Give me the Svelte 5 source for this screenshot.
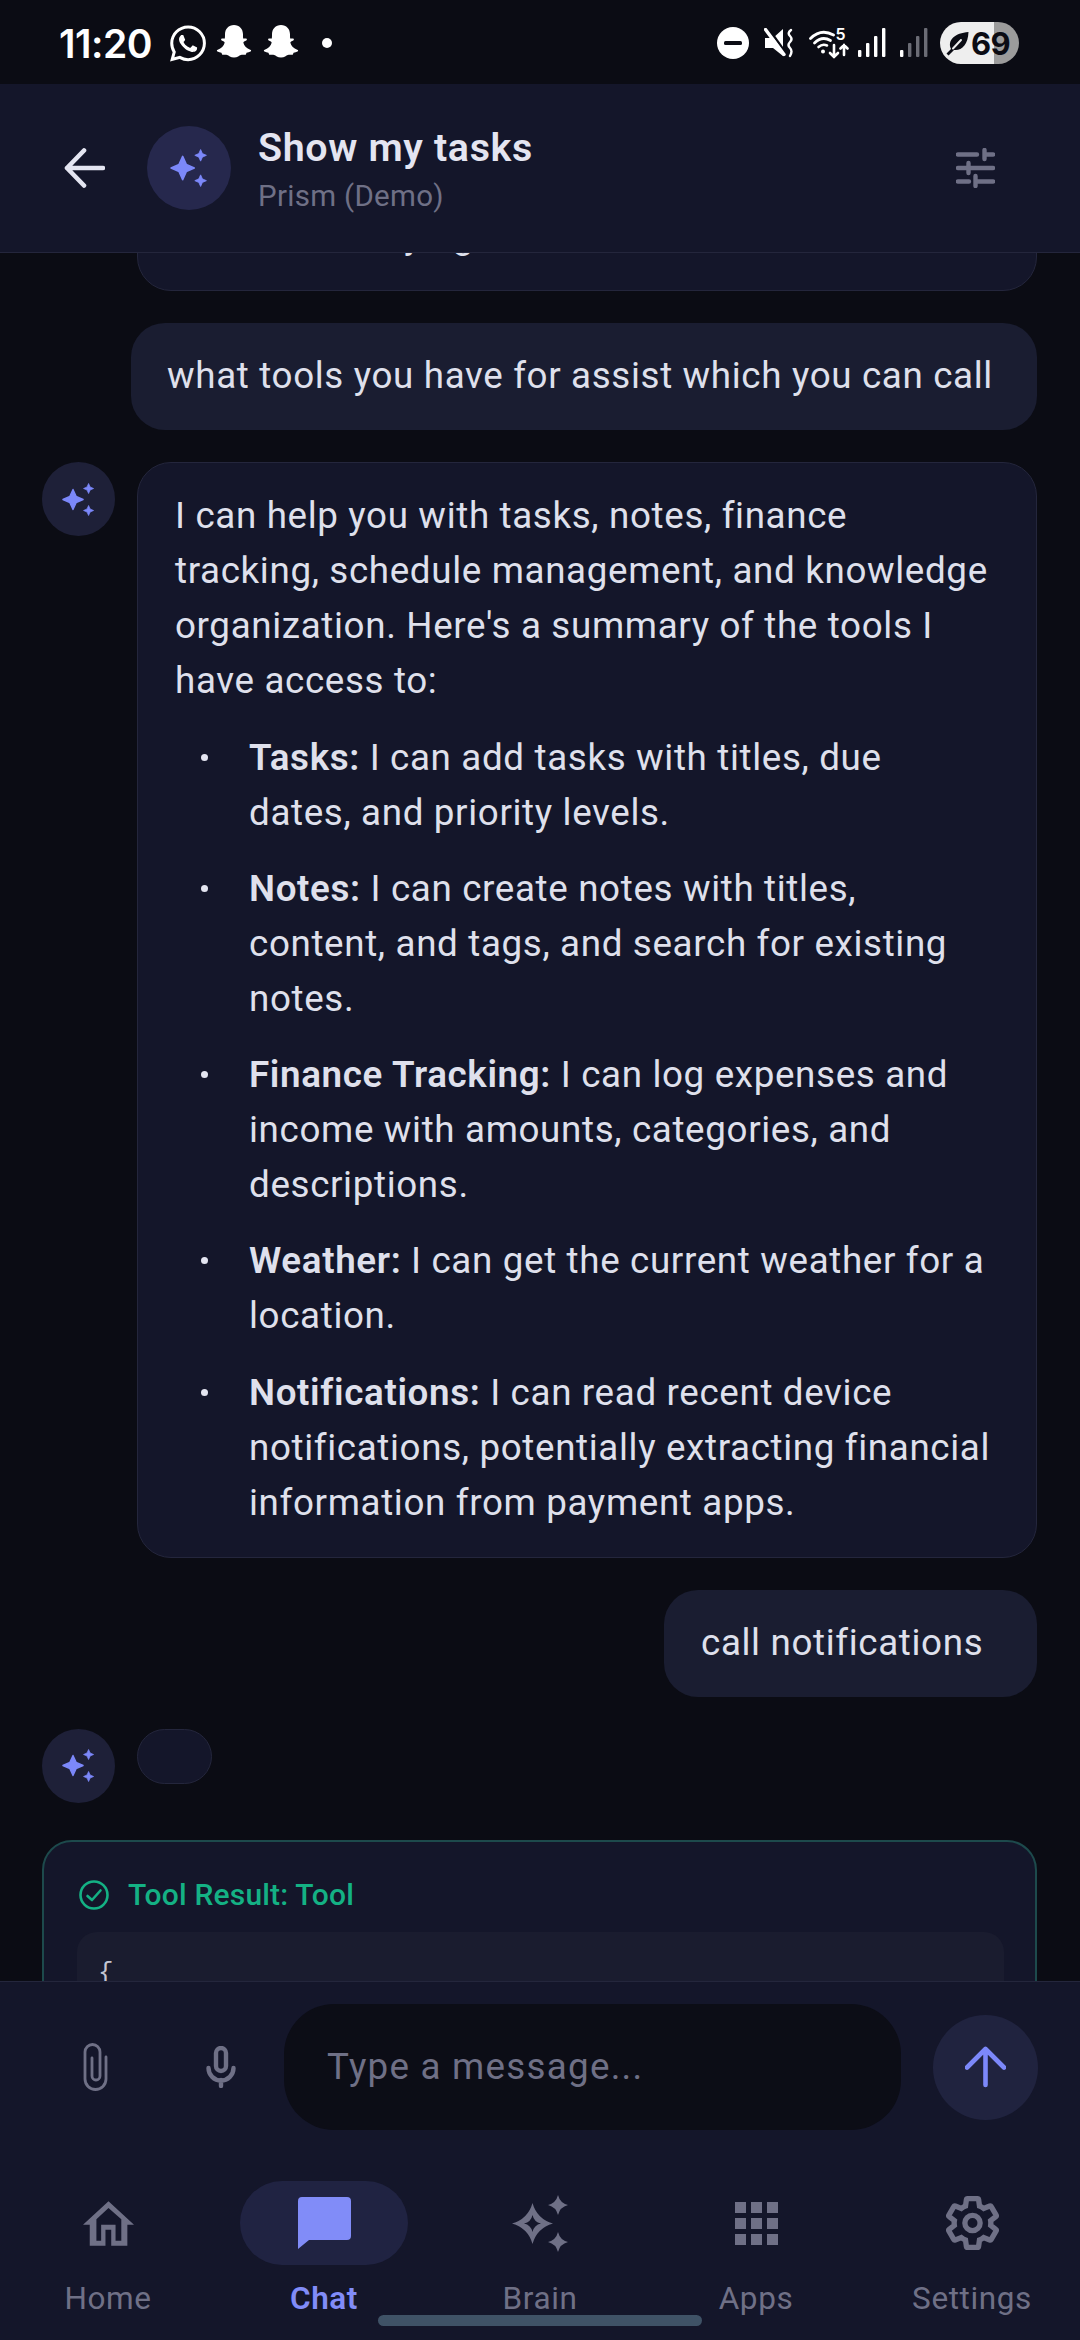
<script>
  const items = [
    { b: 'Tasks:', t: ' I can add tasks with titles, due dates, and priority levels.' },
    { b: 'Notes:', t: ' I can create notes with titles, content, and tags, and search for existing notes.' },
    { b: 'Finance Tracking:', t: ' I can log expenses and income with amounts, categories, and descriptions.' },
    { b: 'Weather:', t: ' I can get the current weather for a location.' },
    { b: 'Notifications:', t: ' I can read recent device notifications, potentially extracting financial information from payment apps.' }
  ];
  const star = 'M12 1 L15.4 8.6 L23 12 L15.4 15.4 L12 23 L8.6 15.4 L1 12 L8.6 8.6Z';
  const ghost = 'M12 2c3 0 5 2.2 5 5.2 0 1 0 1.8.1 2.3.5.2 1.2-.2 1.7 0 .6.3.4 1-.2 1.3-.6.3-1.4.4-1.4 1 .4 1.6 1.9 3.3 3.8 3.9.6.2.7.7.2 1-.7.4-1.5.5-2.2.7-.3.3-.2 1-.6 1.1-.7.2-1.7-.2-2.6.2-.9.3-1.8 1.4-3.8 1.4s-2.9-1.1-3.8-1.4c-.9-.4-1.9 0-2.6-.2-.4-.1-.3-.8-.6-1.1-.7-.2-1.5-.3-2.2-.7-.5-.3-.4-.8.2-1 1.9-.6 3.4-2.3 3.8-3.9 0-.6-.8-.7-1.4-1-.6-.3-.8-1-.2-1.3.5-.2 1.2.2 1.7 0 .1-.5.1-1.3.1-2.3C7 4.2 9 2 12 2z';
</script>

{#snippet sparkles(w)}
  <svg width={w} height={w} viewBox="0 0 36 36" fill="#7c88fa" stroke="#7c88fa" stroke-width="1.500" stroke-linejoin="round">
    <path transform="translate(0 6) scale(1)" d={star} />
    <path transform="translate(23 0) scale(.5)" d={star} />
    <path transform="translate(23 24) scale(.5)" d={star} />
  </svg>
{/snippet}

<div class="screen">
  <div class="status">
    <div class="st-left">
      <span class="time">11:20</span>
      <svg class="wa" viewBox="0 0 24 24" fill="#fff"><path d="M17.472 14.382c-.297-.149-1.758-.867-2.03-.967-.273-.099-.471-.148-.67.15-.197.297-.767.966-.94 1.164-.173.199-.347.223-.644.075-.297-.15-1.255-.463-2.39-1.475-.883-.788-1.48-1.761-1.653-2.059-.173-.297-.018-.458.13-.606.134-.133.298-.347.446-.52.149-.174.198-.298.298-.497.099-.198.05-.371-.025-.52-.075-.149-.669-1.612-.916-2.207-.242-.579-.487-.5-.669-.51-.173-.008-.371-.01-.57-.01-.198 0-.52.074-.792.372-.272.297-1.04 1.016-1.04 2.479 0 1.462 1.065 2.875 1.213 3.074.149.198 2.096 3.2 5.077 4.487.709.306 1.262.489 1.694.625.712.227 1.36.195 1.871.118.571-.085 1.758-.719 2.006-1.413.248-.694.248-1.289.173-1.413-.074-.124-.272-.198-.57-.347m-5.421 7.403h-.004a9.87 9.87 0 01-5.031-1.378l-.361-.214-3.741.982.998-3.648-.235-.374a9.86 9.86 0 01-1.51-5.26c.001-5.45 4.436-9.884 9.888-9.884 2.64 0 5.122 1.03 6.988 2.898a9.825 9.825 0 012.893 6.994c-.003 5.45-4.437 9.884-9.885 9.884m8.413-18.297A11.815 11.815 0 0012.05 0C5.495 0 .16 5.335.157 11.892c0 2.096.547 4.142 1.588 5.945L.057 24l6.305-1.654a11.882 11.882 0 005.683 1.448h.005c6.554 0 11.89-5.335 11.893-11.893a11.821 11.821 0 00-3.48-8.413z"/></svg>
      <svg class="snap" viewBox="1.500 2 21 20" fill="#fff"><path d={ghost}/></svg>
      <svg class="snap" viewBox="1.500 2 21 20" fill="#fff"><path d={ghost}/></svg>
      <span class="dot"></span>
    </div>
    <div class="st-right">
      <svg class="dnd" viewBox="0 0 32 32"><circle cx="16" cy="16" r="16" fill="#fff"/><rect x="7" y="14" width="18" height="4" rx="1.500" fill="#0b0c14"/></svg>
      <svg class="mute" viewBox="0 0 30 30" fill="#fff">
        <path d="M1 10 H9 L19 1 V28 L9 20 H1Z"/>
        <path d="M4 0 L24 28" stroke="#0b0c14" stroke-width="2.500"/>
        <path d="M1.500 1.500 L20 26.500" stroke="#fff" stroke-width="3.400" stroke-linecap="round"/>
        <path d="M27 2 Q23 5 26 8 Q29 11 26 14 Q23 17 26 20 Q29 23 26 28" fill="none" stroke="#fff" stroke-width="2.400" stroke-linecap="round"/>
      </svg>
      <svg class="wifi" viewBox="0 0 40 32" fill="none" stroke="#fff" stroke-linecap="round">
        <path d="M1.500 11.500 Q12 1 24.500 8" stroke-width="2.800"/>
        <path d="M5.500 16 Q13 8.500 21.500 13.500" stroke-width="2.800"/>
        <path d="M9.500 20 Q13.500 16.500 18 18.500" stroke-width="2.600"/>
        <circle cx="14" cy="24.500" r="2" fill="#fff" stroke="none"/>
        <text x="26.500" y="13" font-size="16" font-family="Inter, sans-serif" font-weight="600" fill="#fff" stroke="none">5</text>
        <path d="M25 18 V30 M21 26 L25 30 L29 26" stroke-width="2.600"/>
        <path d="M35 28 V18 M31.500 21.500 L35 18 L38.500 21.500" stroke-width="2.600"/>
      </svg>
      <svg class="sig" viewBox="0 0 28 30" fill="#fff"><rect x="0" y="22" width="3.400" height="7" rx="1"/><rect x="8" y="15" width="3.400" height="14" rx="1"/><rect x="16" y="8" width="3.400" height="21" rx="1"/><rect x="24" y="0" width="3.400" height="29" rx="1"/></svg>
      <svg class="sig sig2" viewBox="0 0 28 30"><rect x="0" y="22" width="3.400" height="7" rx="1" fill="#fff"/><rect x="8" y="15" width="3.400" height="14" rx="1" fill="#6b6c75"/><rect x="16" y="8" width="3.400" height="21" rx="1" fill="#6b6c75"/><rect x="24" y="0" width="3.400" height="29" rx="1" fill="#6b6c75"/></svg>
      <div class="batt">
        <svg viewBox="0 0 23 25"><path fill="#0b0c14" d="M22.500 1 C22 14 15.500 20 8 19 L2.500 24.500 L0.500 22.500 L5 18 C1 9 9 2 22.500 1Z"/><path d="M7 17.500 L15 9" stroke="#eeeeee" stroke-width="2" stroke-linecap="round"/></svg>
        <span>69</span>
      </div>
    </div>
  </div>

  <header class="head">
    <svg class="back" viewBox="0 0 41 40" fill="none" stroke="#e4e5f1" stroke-width="4.600" stroke-linecap="round" stroke-linejoin="round"><path d="M3 20 H39 M20 2.500 L3 20 L20 37.500"/></svg>
    <div class="hava">{@render sparkles(38)}</div>
    <div class="htext">
      <div class="htitle">Show my tasks</div>
      <div class="hsub">Prism (Demo)</div>
    </div>
    <svg class="tune" viewBox="0 0 39 40" fill="none" stroke="#6f7086" stroke-width="4.400" stroke-linecap="round"><path d="M2 6.500 H21 M29 6.500 H37 M28.500 2 V11 M2 20 H10 M13 20 H37 M12.500 15 V25 M2 33.500 H13 M20 33.500 H37 M19.500 28 V38"/></svg>
  </header>

  <main class="msgs">
    <div class="row clipped"><div class="bubble ai prev">I am still studying</div></div>

    <div class="row end"><div class="bubble user u1">what tools you have for assist which you can call</div></div>

    <div class="row">
      <div class="ava">{@render sparkles(33)}</div>
      <div class="bubble ai">
        <p>I can help you with tasks, notes, finance tracking, schedule management, and knowledge organization. Here's a summary of the tools I have access to:</p>
        <ul>
          {#each items as it}
            <li><b>{it.b}</b>{it.t}</li>
          {/each}
        </ul>
      </div>
    </div>

    <div class="row end"><div class="bubble user u2">call notifications</div></div>

    <div class="row">
      <div class="ava">{@render sparkles(33)}</div>
      <div class="bubble ai empty"></div>
    </div>

    <section class="tool">
      <div class="tool-h">
        <svg viewBox="0 0 30 30" fill="none" stroke="#14b184" stroke-width="2.600" stroke-linecap="round" stroke-linejoin="round"><circle cx="15" cy="15" r="13.500"/><path d="M8.500 16 L13 20 L21.500 10.500"/></svg>
        <span>Tool Result: Tool</span>
      </div>
      <pre class="code">{'{'}</pre>
    </section>
  </main>

  <footer class="foot">
    <div class="composer">
      <button class="ic" aria-label="Attach">
        <svg width="25" height="48" viewBox="0 0 25 48" fill="none" stroke="#6f7086" stroke-width="2.800" stroke-linecap="round"><path d="M23 14 V36 A10.500 10.500 0 0 1 2 36 V9 A7.500 7.500 0 0 1 17 9 V33 A4 4 0 0 1 9 33 V15"/></svg>
      </button>
      <button class="ic" aria-label="Voice">
        <svg width="30" height="42" viewBox="0 0 30 42" fill="none" stroke="#6f7086" stroke-width="4.400" stroke-linecap="round"><rect x="10" y="2" width="10" height="23" rx="5"/><path d="M2.500 22 A12.500 12.500 0 0 0 27.500 22 M15 34 V40"/></svg>
      </button>
      <div class="input">Type a message...</div>
      <button class="send" aria-label="Send">
        <svg width="41" height="42" viewBox="0 0 41 42" fill="none" stroke="#7c88fa" stroke-width="4.600" stroke-linecap="round" stroke-linejoin="round"><path d="M20.500 39 V3 M2 21.500 L20.500 3 L39 21.500"/></svg>
      </button>
    </div>
    <nav class="nav">
      <div class="tab">
        <div class="slot"><svg width="51" height="45" viewBox="0 0 50.600 44.300" fill="#6f7086"><path fill-rule="evenodd" d="M25.300 0 L50.600 23.300 H44 V44.300 H28 V28.300 H22.300 V44.300 H6.700 V23.300 H0Z M25.300 6.700 L13.300 18 V39.300 H18 V23.300 H32.300 V39.300 H38 V18Z"/></svg></div>
        <span>Home</span>
      </div>
      <div class="tab on">
        <div class="slot"><svg width="53" height="52" viewBox="0 0 53 52" fill="#818cf8"><path d="M4 0 H49 A4 4 0 0 1 53 4 V39 A4 4 0 0 1 49 43 H11 L0 52 V4 A4 4 0 0 1 4 0Z"/></svg></div>
        <span>Chat</span>
      </div>
      <div class="tab">
        <div class="slot"><svg width="56" height="57" viewBox="0 0 56 57" fill="#6f7086">
          <path fill-rule="evenodd" d="M20.500 8 Q25 24 41 28.500 Q25 33 20.500 49 Q16 33 0 28.500 Q16 24 20.500 8Z M20.500 20 Q22 27 29 28.500 Q22 30 20.500 37 Q19 30 12 28.500 Q19 27 20.500 20Z"/>
          <path d="M46 0 Q48 8 56 10 Q48 12 46 20 Q44 12 36 10 Q44 8 46 0Z"/>
          <path d="M46 37 Q48 45 56 47 Q48 49 46 57 Q44 49 36 47 Q44 45 46 37Z"/>
        </svg></div>
        <span>Brain</span>
      </div>
      <div class="tab">
        <div class="slot"><div class="grid9">{#each Array(9) as _}<i></i>{/each}</div></div>
        <span>Apps</span>
      </div>
      <div class="tab">
        <div class="slot"><svg width="53" height="56" viewBox="2 1 20 22" fill="none" stroke="#6f7086" stroke-width="2.100"><path d="M19.140 12.940c.04-.3.06-.61.06-.94 0-.32-.02-.64-.07-.94l2.030-1.580c.18-.14.23-.41.12-.61l-1.920-3.320c-.12-.22-.37-.29-.59-.22l-2.390.96c-.5-.38-1.030-.7-1.620-.94l-.36-2.540c-.04-.24-.24-.41-.48-.41h-3.840c-.24 0-.43.17-.47.41l-.36 2.540c-.59.24-1.130.57-1.620.94l-2.390-.96c-.22-.08-.47 0-.59.22L2.740 8.870c-.12.21-.08.47.12.61l2.030 1.580c-.05.3-.09.63-.09.94s.02.64.07.94l-2.030 1.580c-.18.14-.23.41-.12.61l1.920 3.320c.12.22.37.29.59.22l2.390-.96c.5.38 1.030.7 1.620.94l.36 2.540c.05.24.24.41.48.41h3.840c.24 0 .44-.17.47-.41l.36-2.540c.59-.24 1.130-.56 1.620-.94l2.390.96c.22.08.47 0 .59-.22l1.920-3.320c.12-.22.07-.47-.12-.61l-2.010-1.580z"/><circle cx="12" cy="12" r="3"/></svg></div>
        <span>Settings</span>
      </div>
    </nav>
    <div class="indicator"></div>
  </footer>
</div>

<style>
  :global(body) { margin: 0; background: #0b0c14; }
  .screen {
    width: 1080px; height: 2340px; display: flex; flex-direction: column; overflow: hidden;
    background: #0b0c14; font-family: Roboto, sans-serif; color: #e4e5f1;
  }
  .status { height: 84px; flex: none; display: flex; justify-content: space-between; align-items: center; padding: 2px 61px 0 59px; box-sizing: border-box; }
  .st-left, .st-right { display: flex; align-items: center; }
  .time { font: 600 39px Inter, sans-serif; letter-spacing: -0.5px; color: #fff; width: 112px; }
  .wa { width: 36px; height: 37px; margin-left: -1px; }
  .snap { width: 38px; height: 36px; margin-left: 9px; }
  .dot { width: 10px; height: 10px; border-radius: 50%; background: #fff; margin-left: 22px; }
  .dnd { width: 32px; height: 32px; }
  .mute { width: 30px; height: 30px; margin-left: 15px; }
  .wifi { width: 40px; height: 32px; margin-left: 15px; }
  .sig { width: 28px; height: 30px; margin-left: 9px; }
  .sig2 { margin-left: 14px; }
  .batt { width: 79px; height: 42px; border-radius: 21px; margin-left: 12px; display: flex; align-items: center; padding-left: 6px; box-sizing: border-box;
    background: linear-gradient(90deg, #eeeeee 68%, #9c9c9c 68%); color: #0b0c14; font: 700 31px Inter, sans-serif; letter-spacing: -0.6px; }
  .batt svg { width: 23px; height: 25px; margin-right: 2px; flex: none; }

  .head { height: 169px; flex: none; box-sizing: border-box; background: #14162a; border-bottom: 1px solid #24263c; display: flex; align-items: center; padding: 0 85px 1px 64px; position: relative; z-index: 2; }
  .back { width: 41px; height: 40px; }
  .hava { width: 84px; height: 84px; border-radius: 50%; background: #26284d; display: flex; align-items: center; justify-content: center; margin-left: 42px; }
  .htext { margin-left: 27px; flex: 1; padding-top: 5px; }
  .htitle { font-size: 39.400px; font-weight: 600; line-height: 50px; letter-spacing: .65px; color: #e4e5f1; }
  .hsub { font-size: 29.500px; line-height: 42px; letter-spacing: .3px; color: #6f7086; margin-top: 2px; }
  .tune { width: 39px; height: 40px; }

  .msgs { flex: 1; min-height: 0; overflow: hidden; display: flex; flex-direction: column; gap: 32px; padding: 0 43px 0 42px; }
  .row { display: flex; gap: 22px; flex: none; align-items: flex-start; }
  .row.end { justify-content: flex-end; }
  .clipped { justify-content: flex-end; margin-top: -71px; }
  .ava { width: 73px; height: 74px; border-radius: 50%; background: #1e2038; display: flex; align-items: center; justify-content: center; flex: none; }
  .bubble { font-size: 36.750px; line-height: 55.100px; letter-spacing: .65px; box-sizing: border-box; padding: 25px 45px 27px 37px; color: #dfe0ec; }
  .user { background: #1a1d31; border-radius: 34px; }
  .u1 { width: 906px; white-space: nowrap; padding-left: 36px; }
  .u2 { width: 373px; white-space: nowrap; }
  .ai { background: #14162a; border: 1px solid #24263c; border-radius: 34px; flex: 1; }
  .prev { flex: none; width: 900px; }
  .empty { flex: none; width: 75px; height: 55px; padding: 0; border-radius: 28px; }
  p { margin: 0 0 21px; }
  ul { margin: 0; padding: 0; list-style: none; }
  li { position: relative; padding-left: 74px; margin-bottom: 21px; }
  li:last-child { margin-bottom: 0; }
  li::before { content: ''; position: absolute; left: 26px; top: 24px; width: 7px; height: 7px; border-radius: 50%; background: #e4e5f1; }
  b { font-weight: 600; }

  .tool { flex: none; margin-top: 5px; background: #14162a; border: 2px solid #1d4a4c; border-radius: 30px; padding: 37px 31px 0 33px; height: 400px; box-sizing: border-box; }
  .tool-h { display: flex; align-items: center; gap: 19px; color: #14b184; font-size: 30px; font-weight: 500; line-height: 32px; letter-spacing: .2px; padding-left: 2px; }
  .tool-h svg { width: 30px; height: 30px; flex: none; }
  .code { margin: 21px 0 0; background: #1a1c2f; border-radius: 20px; padding: 26px 21px; font: 26px "Liberation Mono", monospace; color: #c4c5d2; height: 200px; box-sizing: border-box; }

  .foot { flex: none; height: 359px; box-sizing: border-box; background: #14162a; border-top: 1px solid #24263c; position: relative; z-index: 2; }
  .composer { display: flex; align-items: center; padding: 22px 42px 0 33px; }
  button { background: none; border: 0; padding: 0; display: flex; align-items: center; justify-content: center; }
  .ic { width: 125px; height: 126px; flex: none; }
  .input { flex: 1; height: 126px; box-sizing: border-box; background: #0c0d16; border-radius: 50px; display: flex; align-items: center; padding: 0 0 2px 43px; margin-left: 1px;
    font-size: 36.750px; letter-spacing: 1.250px; color: #6f7086; }
  .send { width: 105px; height: 105px; border-radius: 50%; background: #20233f; margin-left: 32px; flex: none; }

  .nav { display: grid; grid-template-columns: repeat(5, 216px); padding-top: 51px; }
  .tab { display: flex; flex-direction: column; align-items: center; color: #6f7086; }
  .slot { width: 168px; height: 84px; border-radius: 42px; display: flex; align-items: center; justify-content: center; }
  .tab span { font-size: 31.500px; line-height: 38px; margin-top: 15px; letter-spacing: .6px; }
  .on .slot { background: #202342; }
  .on span { color: #818cf8; font-weight: 600; }
  .grid9 { display: grid; grid-template-columns: repeat(3, 11px); grid-auto-rows: 11px; gap: 5px; }
  .grid9 i { background: #6f7086; }
  .indicator { position: absolute; left: 378px; top: 333px; width: 324px; height: 11px; border-radius: 6px; background: #3f5266; }
</style>
